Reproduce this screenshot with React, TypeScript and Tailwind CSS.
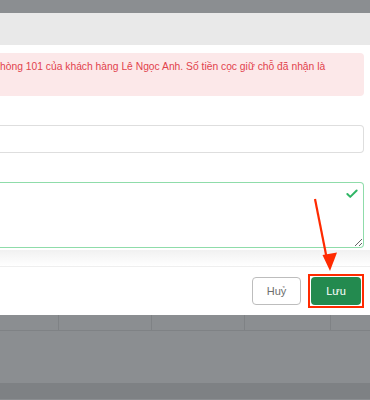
import { Check } from 'lucide-react';

const font = { fontFamily: '"Liberation Sans", Arial, sans-serif' };

function Backdrop() {
  return (
    <div className="flex flex-col bg-[#8b8e91]">
      <div className="grid h-[16px] grid-cols-[59px_93px_93px_86px_1fr] border-b border-[#7f8285]">
        <div className="border-r border-[#7f8285]" />
        <div className="border-r border-[#7f8285]" />
        <div className="border-r border-[#7f8285]" />
        <div className="border-r border-[#7f8285]" />
        <div />
      </div>
      <div className="h-[52px]" />
      <div className="h-[16px] bg-[#7e8184]" />
    </div>
  );
}

export default function App() {
  return (
    <div className="relative h-[400px] w-[370px] overflow-hidden bg-[#8b8e91]" style={font}>
      <div className="h-[13px] bg-[#8b8e91]" />

      <div className="flex flex-col bg-white">
        <div className="h-[32px] bg-[#e9e9e9]" />

        <div className="flex flex-col pr-[6px] pt-[8px]">
          <div className="h-[43px] overflow-hidden rounded-r-[4px] bg-[#fce8e9] pt-[6px] text-[10.3px] leading-[16px] text-[#e2424c]">
            <p className="whitespace-nowrap">
              hòng 101 của khách hàng Lê Ngọc Anh. Số tiền cọc giữ chỗ đã nhận là
            </p>
          </div>

          <div className="mt-[29px] h-[28px] rounded-r-[4px] border border-l-0 border-[#dedede] bg-white" />

          <div className="relative mt-[29px]">
            <textarea
              className="block h-[66px] w-full resize-y rounded-r-[4px] border-[1.5px] border-l-0 border-[#8fdcaa] bg-white outline-none"
              readOnly
            />
            <Check
              className="absolute right-[5px] top-[5px] text-[#2fb565]"
              size={14}
              strokeWidth={3.4}
            />
          </div>
        </div>

        <div className="mt-[2px] h-[16px] bg-gradient-to-b from-[#f1f1f1] to-white" />

        <div className="flex items-center justify-end gap-[7px] border-t border-[#efefef] py-[10px] pr-[6px]">
          <button
            type="button"
            className="h-[28px] w-[49px] rounded-[4px] border border-[#bdbdbd] bg-white text-[11px] text-[#6d6d6d]"
          >
            Huỷ
          </button>
          <div className="-my-[3px] border-2 border-[#ff2a00] p-px">
            <button
              type="button"
              className="h-[28px] w-[50px] rounded-[4px] bg-[#238a4f] text-[11px] text-white"
            >
              Lưu
            </button>
          </div>
        </div>
      </div>

      <Backdrop />

      <svg
        className="pointer-events-none absolute left-0 top-0"
        width={370}
        height={400}
        viewBox="0 0 370 400"
      >
        <line x1={315} y1={199} x2={326.5} y2={257} stroke="#ff2a00" strokeWidth={2.2} />
        <polygon points="330,271 322.5,255 337,252.5" fill="#ff2a00" />
      </svg>
    </div>
  );
}
